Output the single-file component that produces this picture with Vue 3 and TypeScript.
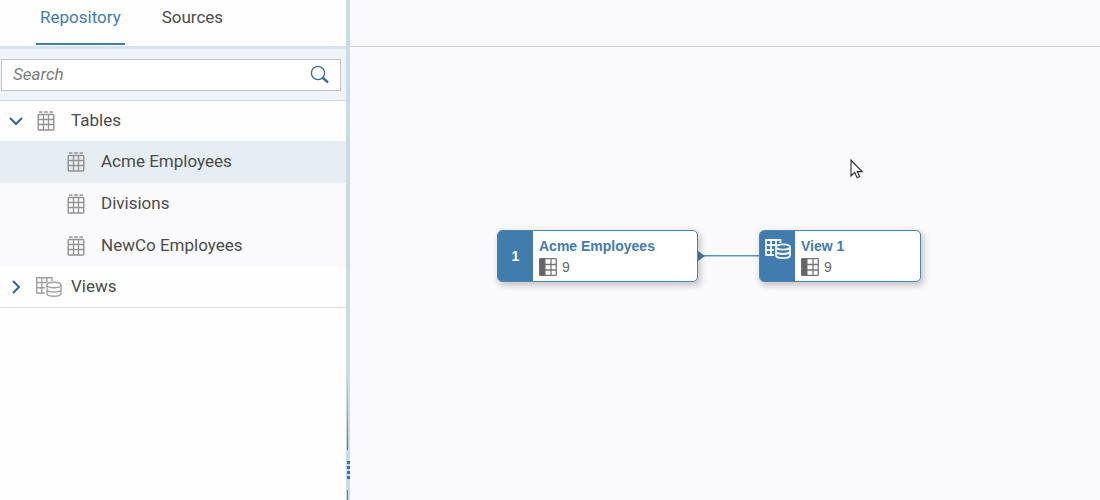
<script setup lang="ts">
import { ref } from 'vue'

interface TreeItem {
  id: string
  label: string
  kind: 'table' | 'view'
  open?: boolean
  children?: TreeItem[]
}

interface GraphNode {
  id: string
  title: string
  columns: number
  badge?: string
  x: number
  y: number
  width: number
}

const tabs = ['Repository', 'Sources']
const activeTab = ref('Repository')
const query = ref('')
const selected = ref('acme')

const tree = ref<TreeItem[]>([
  {
    id: 'tables',
    label: 'Tables',
    kind: 'table',
    open: true,
    children: [
      { id: 'acme', label: 'Acme Employees', kind: 'table' },
      { id: 'divisions', label: 'Divisions', kind: 'table' },
      { id: 'newco', label: 'NewCo Employees', kind: 'table' },
    ],
  },
  { id: 'views', label: 'Views', kind: 'view', open: false },
])

const nodes: GraphNode[] = [
  { id: 'n1', title: 'Acme Employees', columns: 9, badge: '1', x: 147, y: 230, width: 201 },
  { id: 'n2', title: 'View 1', columns: 9, x: 409, y: 230, width: 162 },
]
</script>

<template>
  <div class="app">
    <aside class="sidebar">
      <nav class="tabs" role="tablist">
        <button
          v-for="tab in tabs"
          :key="tab"
          type="button"
          role="tab"
          class="tab"
          :class="{ active: tab === activeTab }"
          :aria-selected="tab === activeTab"
          @click="activeTab = tab"
        >
          {{ tab }}
        </button>
      </nav>

      <form class="search" @submit.prevent>
        <div class="search-box">
          <input v-model="query" class="search-input" type="text" placeholder="Search" aria-label="Search" />
          <button class="search-button" type="submit" aria-label="Start search">
            <svg width="20" height="20" viewBox="0 0 20 20" fill="none" stroke="#3b6c9f">
              <circle cx="8" cy="8" r="6.6" stroke-width="1.3" />
              <path d="M12.500 12.500l5.500 5" stroke-width="2.4" />
            </svg>
          </button>
        </div>
      </form>

      <ul class="tree">
        <li v-for="group in tree" :key="group.id">
          <button type="button" class="row group" :aria-expanded="group.open" @click="group.open = !group.open">
            <svg class="chevron" width="16" height="16" viewBox="0 0 16 16" fill="none" stroke="#2f659c" stroke-width="2">
              <path v-if="group.open" d="M2 5l6 6 6-6" />
              <path v-else d="M5 2l6 6-6 6" />
            </svg>
            <span class="icon">
              <svg v-if="group.kind === 'table'" width="20" height="22" viewBox="0 0 20 22" fill="none" stroke="#929292">
                <path d="M3 2h3.500M8.200 2h3.600M13.500 2h3.500" stroke-width="1.400" />
                <rect x="2.200" y="4.500" width="15.600" height="15.500" rx="1" stroke-width="1.400" />
                <path d="M2 9.500h16M2 14.500h16M7.500 4.500v15.500M12.500 4.500v15.500" stroke-width="1.300" />
              </svg>
              <svg v-else width="26" height="22" viewBox="1 0 26 22" fill="none" stroke="#a0a0a0" stroke-width="1.4">
                <path d="M10 17H1.700V1.700H17V5M1.700 6.500H12.500M1.700 11.700H10M6.800 1.700V17M11.900 1.700V6.500" />
                <ellipse cx="19" cy="9" rx="7" ry="2.700" />
                <path d="M12 9v8.500c0 1.500 3.100 2.700 7 2.700s7-1.200 7-2.700V9M12 13.300c0 1.500 3.100 2.700 7 2.700s7-1.200 7-2.700" />
              </svg>
            </span>
            <span class="label">{{ group.label }}</span>
          </button>
          <ul v-if="group.open && group.children" class="children">
            <li v-for="item in group.children" :key="item.id">
              <button type="button" class="row child" :class="{ selected: item.id === selected }" @click="selected = item.id">
                <span class="icon">
                  <svg width="20" height="22" viewBox="0 0 20 22" fill="none" stroke="#929292">
                    <path d="M3 2h3.500M8.200 2h3.600M13.500 2h3.500" stroke-width="1.400" />
                    <rect x="2.200" y="4.500" width="15.600" height="15.500" rx="1" stroke-width="1.400" />
                    <path d="M2 9.500h16M2 14.500h16M7.500 4.500v15.500M12.500 4.500v15.500" stroke-width="1.300" />
                  </svg>
                </span>
                <span class="label">{{ item.label }}</span>
              </button>
            </li>
          </ul>
        </li>
      </ul>
    </aside>

    <div class="splitter" role="separator" aria-orientation="vertical">
      <span class="line fade"></span>
      <span class="grip"><i v-for="n in 4" :key="n"></i></span>
      <span class="line"></span>
    </div>

    <main class="workspace">
      <header class="toolbar"></header>
      <svg class="link" width="62" height="12" viewBox="0 0 62 12">
        <path d="M0 5.700h62" stroke="#5b92c4" stroke-width="1.600" />
        <path d="M0 1l7 5-7 5z" fill="#427cac" />
      </svg>
      <article
        v-for="node in nodes"
        :key="node.id"
        class="node"
        :style="{ left: node.x + 'px', top: node.y + 'px', width: node.width + 'px' }"
      >
        <div class="node-side">
          <span v-if="node.badge">{{ node.badge }}</span>
          <svg v-else class="view-icon" width="27" height="22" viewBox="0 0 27 22" fill="none" stroke="#f0f6fb" stroke-width="1.8">
            <path d="M10 17H2V2H16.500V5M2 7H12M2 12H10M7 2V17M12 2V7" />
            <ellipse cx="19" cy="9" rx="7" ry="2.700" />
            <path d="M12 9v8.500c0 1.500 3.100 2.700 7 2.700s7-1.200 7-2.700V9M12 13.300c0 1.500 3.100 2.700 7 2.700s7-1.200 7-2.700" />
          </svg>
        </div>
        <div class="node-body">
          <h2>{{ node.title }}</h2>
          <p>
            <svg width="18" height="18" viewBox="0 0 18 18" fill="none" stroke="#777" stroke-width="1.300">
              <rect x="0.700" y="0.700" width="16.600" height="16.600" rx="0.500" />
              <path d="M0.500 0.500h6v17h-6z" fill="#666" stroke="none" />
              <path d="M12 1v16M6 6.500h11M6 12h11" />
            </svg>
            <span>{{ node.columns }}</span>
          </p>
        </div>
      </article>
      <svg class="pointer" width="13" height="20" viewBox="0 0 13 20">
        <path d="M1 1v16l3.700-3.500 2.500 5.300 2.500-1.200-2.500-5H12z" fill="#fff" stroke="#2b2b35" stroke-width="1.100" />
      </svg>
    </main>
  </div>
</template>

<style>
body {
  margin: 0;
}
</style>

<style scoped>
* {
  box-sizing: border-box;
}
.app {
  display: flex;
  min-height: 100vh;
  background: #fafafc;
  font-family: Roboto, "Liberation Sans", sans-serif;
  color: #4b4b4b;
}
button {
  border: 0;
  padding: 0;
  background: none;
  font: inherit;
  color: inherit;
}
.sidebar {
  flex: 0 0 346px;
  background: #fefefe;
}
.tabs {
  display: flex;
  gap: 33px;
  height: 46px;
  padding: 0 36px;
}
.tab {
  height: 45px;
  padding: 0 4px 8px;
  border-bottom: 2px solid transparent;
  font-size: 17px;
  line-height: 35px;
}
.tab.active {
  color: #427cac;
  border-bottom-color: #427cac;
}
.search {
  padding: 10px 5px 9px 1px;
  border-top: 3px solid #d5e3f1;
  border-bottom: 1px solid #d6d8de;
  background: #eef4fa;
}
.search-box {
  display: flex;
  align-items: center;
  height: 32px;
  border: 1px solid #bfc1c5;
  background: #fff;
}
.search-input {
  flex: 1;
  min-width: 0;
  height: 28px;
  padding: 0 0 2px 11px;
  border: 0;
  outline: 0;
  background: none;
  font: italic 17px Roboto, "Liberation Sans", sans-serif;
  color: #4b4b4b;
}
.search-input::placeholder {
  color: #7c7c7c;
  opacity: 1;
}
.search-button {
  display: flex;
  padding: 0 10px;
}
.tree,
.children {
  margin: 0;
  padding: 0;
  list-style: none;
}
.tree {
  border-bottom: 1px solid #dfe2ec;
}
.children {
  background: #fafafc;
}
.row {
  display: flex;
  align-items: center;
  width: 100%;
  height: 42px;
  padding-bottom: 1px;
  text-align: left;
  font-size: 17px;
}
.group {
  height: 40px;
  padding-left: 8px;
}
.chevron {
  flex: none;
  margin-right: 12px;
}
.child {
  padding-left: 66px;
}
.selected {
  background: #e6edf3;
}
.icon {
  flex: none;
  display: flex;
  width: 35px;
}
.label {
  line-height: 36px;
  padding-bottom: 2px;
}
.splitter {
  flex: 0 0 4px;
  display: flex;
  flex-direction: column;
  justify-content: flex-end;
  padding-left: 1px;
  background: #c9daeb;
}
.line {
  width: 1px;
  height: 10px;
  background: #4a80b5;
}
.line.fade {
  height: 75px;
  background: linear-gradient(#c9daeb, #3f76ad);
}
.grip {
  display: flex;
  flex-direction: column;
  gap: 2px;
  padding: 11px 0;
}
.grip i {
  width: 3px;
  height: 3px;
  background: #41719f;
}
.workspace {
  position: relative;
  flex: 1;
}
.toolbar {
  height: 47px;
  border-bottom: 1px solid #d4d4d6;
}
.node {
  position: absolute;
  display: flex;
  height: 52px;
  border: 1px solid #4a86b9;
  border-radius: 5px;
  background: #fff;
  box-shadow: 2px 3px 6px 1px rgba(0, 0, 0, 0.2);
  font-family: "Liberation Sans", Arial, sans-serif;
}
.node-side {
  flex: 0 0 35px;
  display: flex;
  align-items: center;
  justify-content: center;
  border-radius: 4px 0 0 4px;
  background: #427cac;
  color: #fff;
  font-size: 14px;
  font-weight: 700;
}
.view-icon {
  align-self: flex-start;
  margin-top: 7px;
}
.node-body {
  padding: 6px 0 0 6px;
}
.node-body h2 {
  margin: 0;
  font-size: 14px;
  line-height: 18px;
  font-weight: 700;
  color: #427cac;
}
.node-body p {
  display: flex;
  align-items: center;
  gap: 5px;
  margin: 3px 0 0;
  font-size: 14px;
  line-height: 18px;
  color: #666;
}
.link {
  position: absolute;
  left: 348px;
  top: 250px;
}
.pointer {
  position: absolute;
  left: 500px;
  top: 159px;
}
</style>
